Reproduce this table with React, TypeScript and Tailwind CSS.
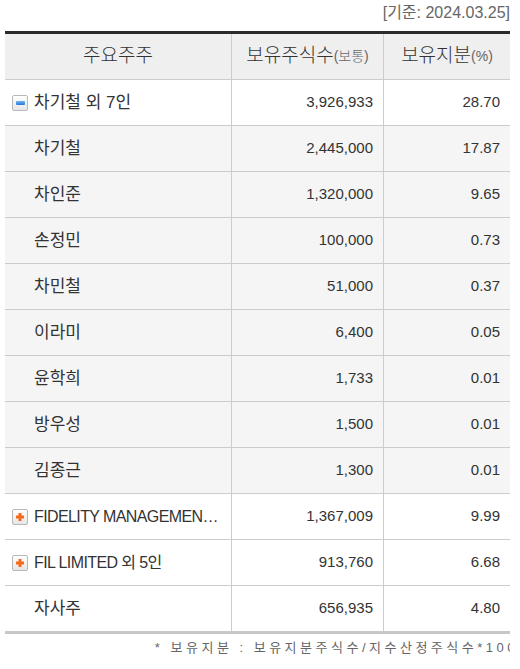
const rows = [
  { name: "차기철 외 7인", shares: "3,926,933", pct: "28.70", icon: "minus" },
  { name: "차기철", shares: "2,445,000", pct: "17.87", sub: true },
  { name: "차인준", shares: "1,320,000", pct: "9.65", sub: true },
  { name: "손정민", shares: "100,000", pct: "0.73", sub: true },
  { name: "차민철", shares: "51,000", pct: "0.37", sub: true },
  { name: "이라미", shares: "6,400", pct: "0.05", sub: true },
  { name: "윤학희", shares: "1,733", pct: "0.01", sub: true },
  { name: "방우성", shares: "1,500", pct: "0.01", sub: true },
  { name: "김종근", shares: "1,300", pct: "0.01", sub: true },
  { name: "FIDELITY MANAGEMENT & RESEARCH COMPANY LLC 외 3인", shares: "1,367,009", pct: "9.99", icon: "plus", latin: true },
  { name: "FIL LIMITED 외 5인", shares: "913,760", pct: "6.68", icon: "plus", latin: true },
  { name: "자사주", shares: "656,935", pct: "4.80" },
];

function ToggleIcon({ kind }: { kind: string }) {
  return (
    <span className="w-[16px] h-[16px] shrink-0 rounded-[2px] border border-[#b9b9b9] bg-gradient-to-b from-white to-[#e6e6e6] flex items-center justify-center">
      {kind === "minus" ? (
        <span className="w-[9px] h-[4px] rounded-[1px] bg-gradient-to-b from-[#6fb2f2] to-[#1f78d6]" />
      ) : (
        <svg width="10" height="10" viewBox="0 0 10 10">
          <rect x="3.5" y="1" width="3" height="8" fill="#f26b1d" />
          <rect x="1" y="3.5" width="8" height="3" fill="#f26b1d" />
        </svg>
      )}
    </span>
  );
}

export default function App() {
  return (
    <div
      className="w-[520px] bg-white text-[#333]"
      style={{ fontFamily: '"Liberation Sans", "Noto Sans CJK KR", sans-serif' }}
    >
      <div className="h-[31px] pr-[10px] text-right text-[16px] leading-[26px] text-[#666]">[기준: 2024.03.25]</div>
      <div className="ml-[5px] w-[505px]">
        <div className="flex h-[49px] border-t-[3px] border-t-[#2b2b2b] border-b border-b-[#cccccc] bg-[#efefef] text-[19px] font-light">
          <div className="w-[227px] border-r border-[#cccccc] flex items-center justify-center">주요주주</div>
          <div className="w-[152px] border-r border-[#cccccc] flex items-center justify-center">
            보유주식수<span className="text-[14px] text-[#666]">(보통)</span>
          </div>
          <div className="flex-1 flex items-center justify-center">
            보유지분<span className="text-[14px] text-[#666]">(%)</span>
          </div>
        </div>
        {rows.map((r, i) => {
          const last = i === rows.length - 1;
          return (
            <div
              key={i}
              className={
                "flex " +
                (last ? "h-[48px] border-b-[3px] border-b-[#c8c8c8] " : "h-[46px] border-b border-b-[#cccccc] ") +
                (r.sub ? "bg-[#f5f5f5]" : "bg-white")
              }
            >
              <div className="w-[227px] border-r border-[#cccccc] flex items-center pl-[7px] pr-[4px] gap-[6px] text-[17px] min-w-0">
                {r.icon ? <ToggleIcon kind={r.icon} /> : <span className="w-[16px] shrink-0" />}
                <span className={r.latin ? "truncate text-[16px] tracking-[-0.6px]" : "truncate"}>{r.name}</span>
              </div>
              <div className="w-[152px] border-r border-[#cccccc] flex items-center justify-end pr-[10px] text-[15px]">
                {r.shares}
              </div>
              <div className="flex-1 flex items-center justify-end pr-[10px] text-[15px]">{r.pct}</div>
            </div>
          );
        })}
        <div className="flex justify-end overflow-hidden h-[28px] leading-[28px] text-[13px] text-[#666]">
          <span className="shrink-0 whitespace-nowrap tracking-[3.5px] -mr-[8px]">
            * 보유지분 : 보유지분주식수/지수산정주식수*100
          </span>
        </div>
      </div>
    </div>
  );
}
